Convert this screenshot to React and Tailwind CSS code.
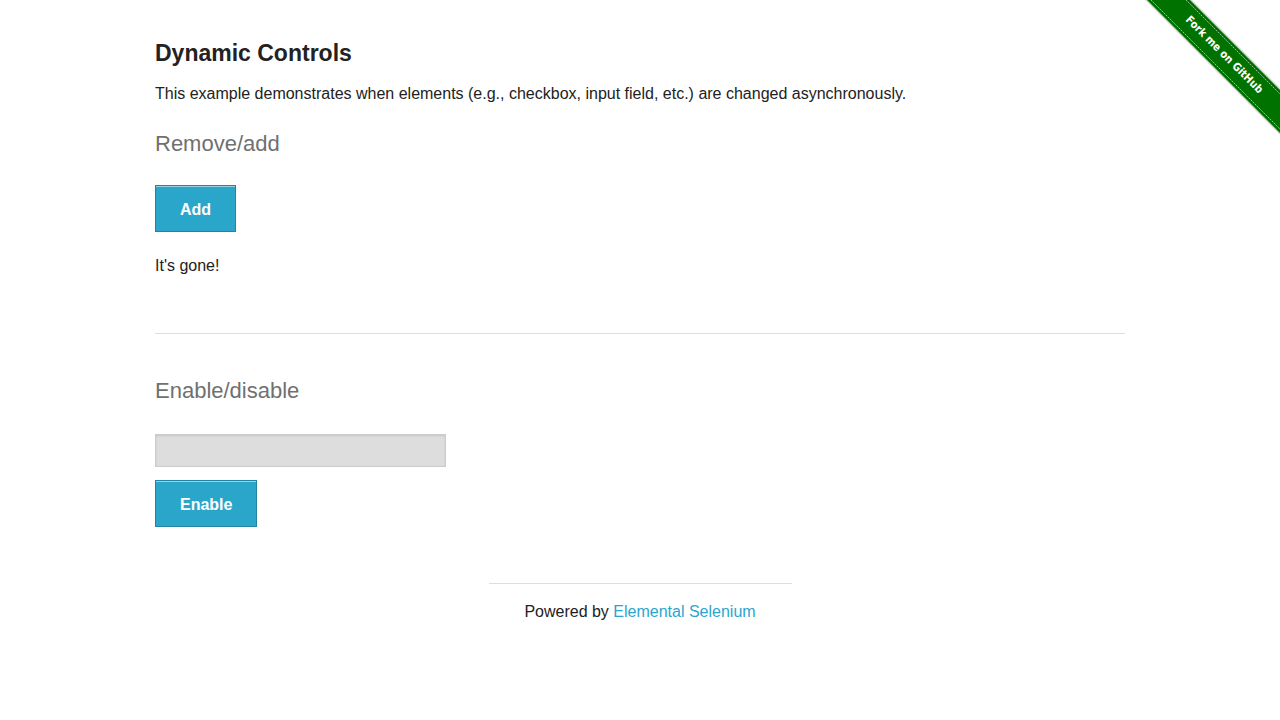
import React from 'react';

function Ribbon() {
    return (
        <svg className="absolute top-0 right-0" width="135" height="135" viewBox="0 0 135 135">
            <polygon points="0,0 47,0 135,88 135,135" fill="#000000" opacity="0.15" />
            <polygon points="2,0 45,0 135,90 135,133" fill="#007200" />
            <line x1="6" y1="0" x2="135" y2="129" stroke="#ffffff" strokeWidth="0.8" strokeDasharray="2 1" opacity="0.7" />
            <line x1="41" y1="0" x2="135" y2="94" stroke="#ffffff" strokeWidth="0.8" strokeDasharray="2 1" opacity="0.7" />
            <text
                x="0" y="0"
                transform="translate(79,55) rotate(45)"
                textAnchor="middle"
                dominantBaseline="middle"
                fill="#ffffff"
                fontFamily="'DejaVu Sans', sans-serif"
                fontWeight="bold"
                fontSize="11"
                textLength="104"
                lengthAdjust="spacingAndGlyphs"
            >
                Fork me on GitHub
            </text>
        </svg>
    );
}

function Button({ children }) {
    return (
        <button className="h-[47px] px-[24px] pt-[2px] bg-[#2ba6cb] border border-[#2284a1] shadow-[inset_0_1px_0_rgba(255,255,255,0.5)] text-white font-bold text-[16px] leading-none">
            {children}
        </button>
    );
}

export default function App() {
    return (
        <div className="relative min-h-[720px] bg-white text-[#222222] font-['Liberation_Sans',Arial,sans-serif]">
            <Ribbon />
            <div className="w-[970px] mx-auto pt-[39px]">
                <h3 className="text-[23px] leading-[28px] font-bold">Dynamic Controls</h3>
                <p className="mt-[15px] text-[16px] leading-[24px]">
                    This example demonstrates when elements (e.g., checkbox, input field, etc.) are changed asynchronously.
                </p>

                <h4 className="mt-[24px] text-[22px] leading-[28px] font-light text-[#707070]">Remove/add</h4>
                <div className="mt-[27px]">
                    <Button>Add</Button>
                </div>
                <p className="mt-[22px] text-[16px] leading-[24px]">It's gone!</p>

                <hr className="mt-[55px] border-0 border-t border-[#dddddd]" />

                <h4 className="mt-[43px] text-[22px] leading-[28px] font-light text-[#707070]">Enable/disable</h4>
                <div className="mt-[29px]">
                    <input
                        type="text"
                        disabled
                        className="block w-[291px] h-[33px] bg-[#dddddd] border border-[#cccccc] shadow-[inset_0_1px_2px_rgba(0,0,0,0.1)]"
                    />
                </div>
                <div className="mt-[13px]">
                    <Button>Enable</Button>
                </div>

                <div className="mt-[56px] flex flex-col items-center">
                    <hr className="w-[303px] border-0 border-t border-[#dddddd]" />
                    <p className="mt-[16px] text-[16px] leading-[24px]">
                        Powered by <a href="#" className="text-[#2ba6cb]">Elemental Selenium</a>
                    </p>
                </div>
            </div>
        </div>
    );
}
